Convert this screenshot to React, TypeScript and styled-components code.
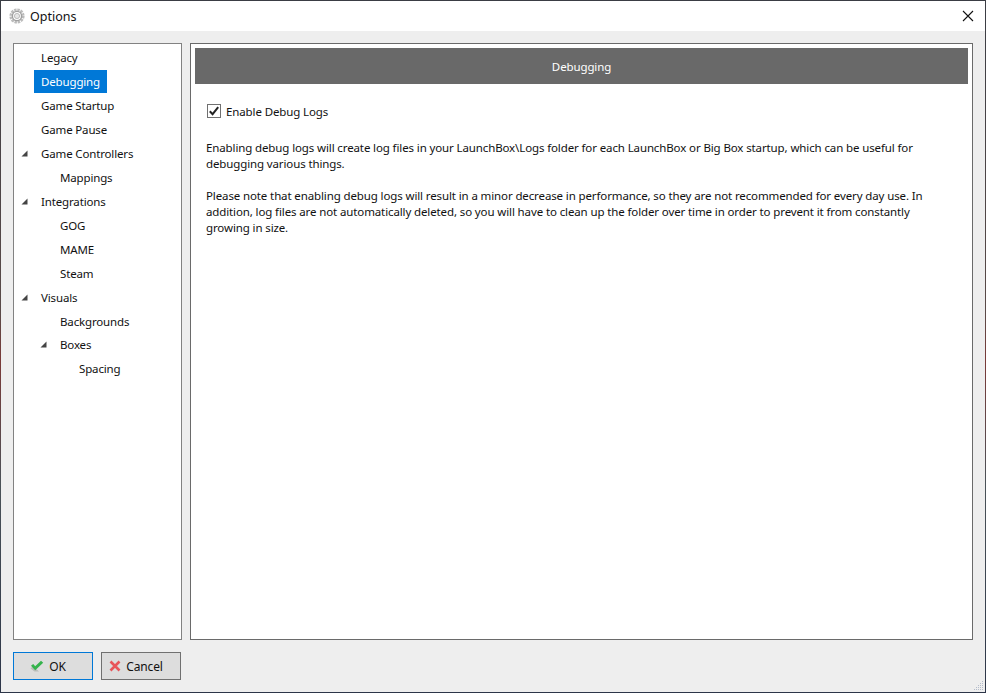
import React from "react";
import styled, { createGlobalStyle } from "styled-components";

const Global = createGlobalStyle`
  html, body { margin: 0; padding: 0; width: 986px; height: 693px; overflow: hidden; background: linear-gradient(to bottom, #3a3d44 0%, #5a4a48 45%, #7a3a38 52%, #4a5258 70%, #2c3548 100%); }
  #root { width: 986px; height: 693px; }
  * { box-sizing: border-box; }
`;

const Screen = styled.div`
  width: 986px;
  height: 693px;
  padding: 1px;
  font-family: "Noto Sans", "Open Sans", sans-serif;
  font-size: 11.5px;
  letter-spacing: -0.12px;
  color: #111;
`;

const Win = styled.div`
  position: relative;
  width: 984px;
  height: 691px;
  background: #eeeeee;
  display: flex;
  flex-direction: column;
`;

const TitleBar = styled.div`
  height: 30px;
  background: #fff;
  display: flex;
  align-items: center;
  padding: 0 9px 0 8px;
  gap: 5px;
  font-size: 12.5px;
  letter-spacing: 0;
  flex: none;
`;

const TitleText = styled.span`
  flex: 1;
`;

const Close = styled.div`
  width: 12px;
  height: 12px;
  margin-right: 2px;
  display: flex;
`;

const Main = styled.div`
  flex: 1;
  min-height: 0;
  display: flex;
  gap: 8px;
  padding: 12px 12px 0 12px;
`;

const TreePanel = styled.div`
  width: 169px;
  height: 597px;
  border: 1px solid #828282;
  background: #fff;
  padding: 2px 0 0 0;
  flex: none;
`;

const Row = styled.div<{ $depth: number; $tight?: boolean }>`
  height: 24px;
  margin-top: ${(p) => (p.$tight ? "-1px" : "0")};
  padding-left: ${(p) => 20 + p.$depth * 19}px;
  display: flex;
  align-items: center;
  position: relative;
`;

const Label = styled.span<{ $selected?: boolean }>`
  display: block;
  height: 23px;
  line-height: 24px;
  padding: 0 7px;
  margin-bottom: 1px;
  background: ${(p) => (p.$selected ? "#0078d7" : "transparent")};
  color: ${(p) => (p.$selected ? "#fff" : "#111")};
  letter-spacing: -0.15px;
`;

const Arrow = styled.svg<{ $depth: number }>`
  position: absolute;
  left: ${(p) => 7 + p.$depth * 19}px;
  top: 8px;
  width: 7px;
  height: 7px;
`;

const Content = styled.div`
  width: 783px;
  height: 597px;
  border: 1px solid #6a6a6a;
  background: #fff;
  padding: 4px;
  flex: none;
`;

const Header = styled.div`
  height: 36px;
  background: #696969;
  color: #fff;
  display: flex;
  align-items: center;
  justify-content: center;
`;

const Body = styled.div`
  padding: 18px 11px 0 11px;
`;

const CheckRow = styled.div`
  display: flex;
  align-items: center;
  gap: 5px;
  height: 18px;
  padding-left: 1px;
  margin-bottom: 20px;
`;

const CheckBox = styled.div`
  width: 14px;
  height: 14px;
  border: 1px solid #707070;
  background: #fff;
  display: flex;
  align-items: center;
  justify-content: center;
`;

const Para = styled.p`
  margin: 0 0 16px 0;
  line-height: 16px;
`;

const Footer = styled.div`
  flex: none;
  height: 52px;
  display: flex;
  gap: 8px;
  padding: 12px 12px 0 12px;
`;

const Btn = styled.div<{ $primary?: boolean }>`
  width: 80px;
  height: 28px;
  background: #dddddd;
  border: 1px solid ${(p) => (p.$primary ? "#0078d7" : "#707070")};
  display: flex;
  align-items: center;
  justify-content: center;
  gap: 5px;
  padding-right: 10px;
  font-size: 12px;
`;

const Grip = styled.svg`
  position: absolute;
  right: 1px;
  bottom: 1px;
  width: 11px;
  height: 11px;
`;

const tree: { label: string; depth: number; open?: boolean; selected?: boolean; tight?: boolean }[] = [
  { label: "Legacy", depth: 0 },
  { label: "Debugging", depth: 0, selected: true },
  { label: "Game Startup", depth: 0 },
  { label: "Game Pause", depth: 0 },
  { label: "Game Controllers", depth: 0, open: true },
  { label: "Mappings", depth: 1 },
  { label: "Integrations", depth: 0, open: true },
  { label: "GOG", depth: 1 },
  { label: "MAME", depth: 1 },
  { label: "Steam", depth: 1 },
  { label: "Visuals", depth: 0, open: true },
  { label: "Backgrounds", depth: 1 },
  { label: "Boxes", depth: 1, open: true, tight: true },
  { label: "Spacing", depth: 2 },
];

const Gear = () => (
  <svg width="16" height="16" viewBox="0 0 16 16" style={{ flex: "none" }}>
    <circle cx="8" cy="8" r="6.2" fill="none" stroke="#bcbcbc" strokeWidth="2.8" strokeDasharray="2.4 0.8" />
    <circle cx="8" cy="8" r="4.6" fill="none" stroke="#a0a0a0" strokeWidth="1.4" />
    <circle cx="8" cy="8" r="2.6" fill="#e6e6e6" stroke="#b0b0b0" strokeWidth="0.8" />
  </svg>
);

export default function App() {
  return (
    <Screen>
      <Global />
      <Win>
        <TitleBar>
          <Gear />
          <TitleText>Options</TitleText>
          <Close>
            <svg width="12" height="12" viewBox="0 0 12 12">
              <path d="M1 1 L11 11 M11 1 L1 11" stroke="#111" strokeWidth="1.1" fill="none" />
            </svg>
          </Close>
        </TitleBar>
        <Main>
          <TreePanel>
            {tree.map((t) => (
              <Row key={t.label} $depth={t.depth} $tight={t.tight}>
                {t.open && (
                  <Arrow $depth={t.depth} viewBox="0 0 7 7">
                    <path d="M6.5 0.5 V6.5 H0.5 Z" fill="#444" />
                  </Arrow>
                )}
                <Label $selected={t.selected}>{t.label}</Label>
              </Row>
            ))}
          </TreePanel>
          <Content>
            <Header>Debugging</Header>
            <Body>
              <CheckRow>
                <CheckBox>
                  <svg width="12" height="12" viewBox="0 0 12 12">
                    <path d="M1.8 6.2 L4.6 9.2 L10.2 2.2" stroke="#222" strokeWidth="2" fill="none" />
                  </svg>
                </CheckBox>
                Enable Debug Logs
              </CheckRow>
              <Para>
                Enabling debug logs will create log files in your LaunchBox\Logs folder for each LaunchBox or Big Box startup, which can be useful for
                <br />
                debugging various things.
              </Para>
              <Para>
                Please note that enabling debug logs will result in a minor decrease in performance, so they are not recommended for every day use. In
                <br />
                addition, log files are not automatically deleted, so you will have to clean up the folder over time in order to prevent it from constantly
                <br />
                growing in size.
              </Para>
            </Body>
          </Content>
        </Main>
        <Footer>
          <Btn $primary>
            <svg width="14" height="12" viewBox="0 0 14 12">
              <path d="M0.5 8.5 L4.5 11.5 L9 11.5 L3 6 Z" fill="#b9bdb9" />
              <path d="M1 5.8 L3.2 4 L5.2 6.2 L11 0.8 L13.2 2.8 L5.2 10.2 Z" fill="#35b34c" />
            </svg>
            OK
          </Btn>
          <Btn>
            <svg width="12" height="12" viewBox="0 0 12 12">
              <path d="M1.5 1.5 L10.5 10.5 M10.5 1.5 L1.5 10.5" stroke="#e8555a" strokeWidth="2.6" fill="none" />
            </svg>
            Cancel
          </Btn>
        </Footer>
        <Grip viewBox="0 0 11 11">
          <g fill="#b4bccb">
            <rect x="9" y="1" width="1" height="1" /><rect x="9" y="3" width="1" height="1" /><rect x="9" y="5" width="1" height="1" /><rect x="9" y="7" width="1" height="1" /><rect x="9" y="9" width="1" height="1" />
            <rect x="7" y="3" width="1" height="1" /><rect x="7" y="5" width="1" height="1" /><rect x="7" y="7" width="1" height="1" /><rect x="7" y="9" width="1" height="1" />
            <rect x="5" y="5" width="1" height="1" /><rect x="5" y="7" width="1" height="1" /><rect x="5" y="9" width="1" height="1" />
            <rect x="3" y="7" width="1" height="1" /><rect x="3" y="9" width="1" height="1" />
            <rect x="1" y="9" width="1" height="1" />
          </g>
        </Grip>
      </Win>
    </Screen>
  );
}
